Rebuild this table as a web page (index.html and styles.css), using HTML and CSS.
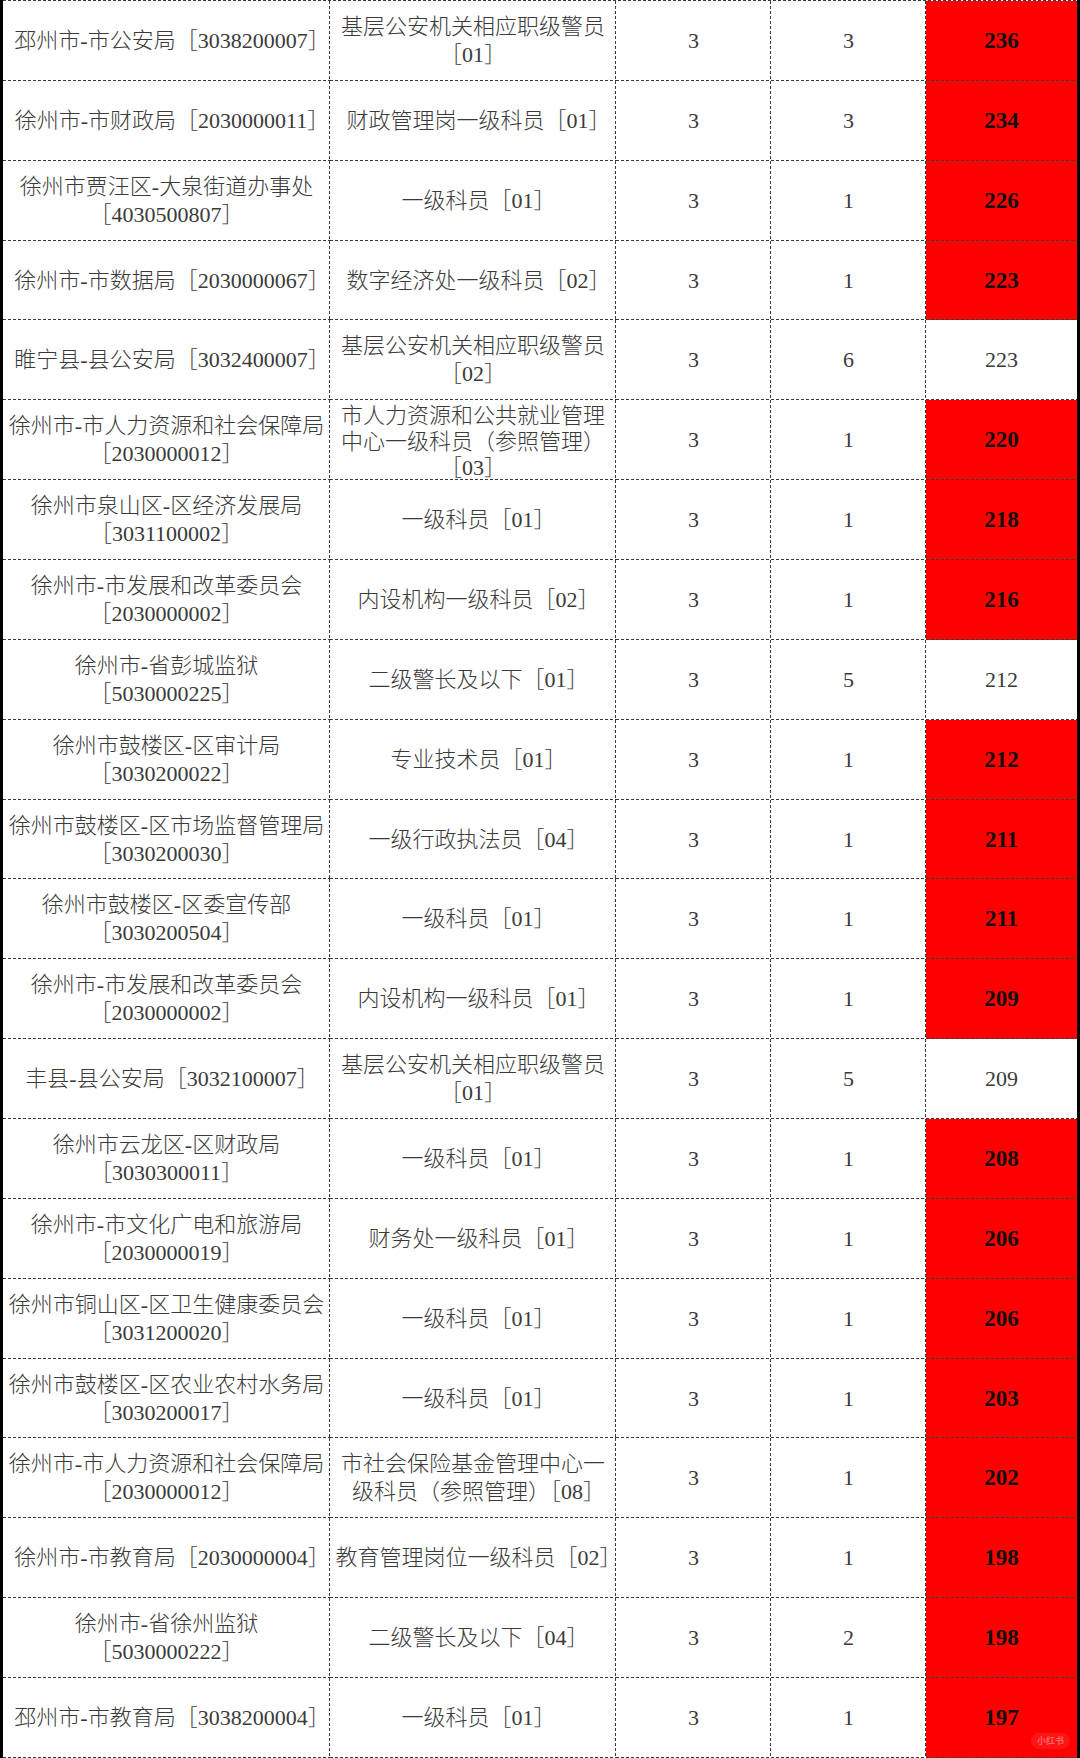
FILE: index.html
```html
<!DOCTYPE html>
<html lang="zh-CN">
<head>
<meta charset="utf-8">
<title>岗位报名统计</title>
<link rel="stylesheet" href="styles.css">
</head>
<body>
<div class="sheet">
  <div class="cell"><p class="txt">邳州市-市公安局<span class="code">［3038200007］</span></p></div>
  <div class="cell"><p class="txt">基层公安机关相应职级警员<br><span class="code solo">［01］</span></p></div>
  <div class="cell">3</div><div class="cell">3</div><div class="cell num hot">236</div>

  <div class="cell"><p class="txt">徐州市-市财政局<span class="code">［2030000011］</span></p></div>
  <div class="cell"><p class="txt">财政管理岗一级科员<span class="code">［01］</span></p></div>
  <div class="cell">3</div><div class="cell">3</div><div class="cell num hot">234</div>

  <div class="cell"><p class="txt">徐州市贾汪区-大泉街道办事处<br><span class="code solo">［4030500807］</span></p></div>
  <div class="cell"><p class="txt">一级科员<span class="code">［01］</span></p></div>
  <div class="cell">3</div><div class="cell">1</div><div class="cell num hot">226</div>

  <div class="cell"><p class="txt">徐州市-市数据局<span class="code">［2030000067］</span></p></div>
  <div class="cell"><p class="txt">数字经济处一级科员<span class="code">［02］</span></p></div>
  <div class="cell">3</div><div class="cell">1</div><div class="cell num hot">223</div>

  <div class="cell"><p class="txt">睢宁县-县公安局<span class="code">［3032400007］</span></p></div>
  <div class="cell"><p class="txt">基层公安机关相应职级警员<br><span class="code solo">［02］</span></p></div>
  <div class="cell">3</div><div class="cell">6</div><div class="cell num">223</div>

  <div class="cell"><p class="txt">徐州市-市人力资源和社会保障局<br><span class="code solo">［2030000012］</span></p></div>
  <div class="cell tight"><p class="txt">市人力资源和公共就业管理<br>中心一级科员（参照管理）<br><span class="code solo">［03］</span></p></div>
  <div class="cell">3</div><div class="cell">1</div><div class="cell num hot">220</div>

  <div class="cell"><p class="txt">徐州市泉山区-区经济发展局<br><span class="code solo">［3031100002］</span></p></div>
  <div class="cell"><p class="txt">一级科员<span class="code">［01］</span></p></div>
  <div class="cell">3</div><div class="cell">1</div><div class="cell num hot">218</div>

  <div class="cell"><p class="txt">徐州市-市发展和改革委员会<br><span class="code solo">［2030000002］</span></p></div>
  <div class="cell"><p class="txt">内设机构一级科员<span class="code">［02］</span></p></div>
  <div class="cell">3</div><div class="cell">1</div><div class="cell num hot">216</div>

  <div class="cell"><p class="txt">徐州市-省彭城监狱<br><span class="code solo">［5030000225］</span></p></div>
  <div class="cell"><p class="txt">二级警长及以下<span class="code">［01］</span></p></div>
  <div class="cell">3</div><div class="cell">5</div><div class="cell num">212</div>

  <div class="cell"><p class="txt">徐州市鼓楼区-区审计局<br><span class="code solo">［3030200022］</span></p></div>
  <div class="cell"><p class="txt">专业技术员<span class="code">［01］</span></p></div>
  <div class="cell">3</div><div class="cell">1</div><div class="cell num hot">212</div>

  <div class="cell"><p class="txt">徐州市鼓楼区-区市场监督管理局<br><span class="code solo">［3030200030］</span></p></div>
  <div class="cell"><p class="txt">一级行政执法员<span class="code">［04］</span></p></div>
  <div class="cell">3</div><div class="cell">1</div><div class="cell num hot">211</div>

  <div class="cell"><p class="txt">徐州市鼓楼区-区委宣传部<br><span class="code solo">［3030200504］</span></p></div>
  <div class="cell"><p class="txt">一级科员<span class="code">［01］</span></p></div>
  <div class="cell">3</div><div class="cell">1</div><div class="cell num hot">211</div>

  <div class="cell"><p class="txt">徐州市-市发展和改革委员会<br><span class="code solo">［2030000002］</span></p></div>
  <div class="cell"><p class="txt">内设机构一级科员<span class="code">［01］</span></p></div>
  <div class="cell">3</div><div class="cell">1</div><div class="cell num hot">209</div>

  <div class="cell"><p class="txt">丰县-县公安局<span class="code">［3032100007］</span></p></div>
  <div class="cell"><p class="txt">基层公安机关相应职级警员<br><span class="code solo">［01］</span></p></div>
  <div class="cell">3</div><div class="cell">5</div><div class="cell num">209</div>

  <div class="cell"><p class="txt">徐州市云龙区-区财政局<br><span class="code solo">［3030300011］</span></p></div>
  <div class="cell"><p class="txt">一级科员<span class="code">［01］</span></p></div>
  <div class="cell">3</div><div class="cell">1</div><div class="cell num hot">208</div>

  <div class="cell"><p class="txt">徐州市-市文化广电和旅游局<br><span class="code solo">［2030000019］</span></p></div>
  <div class="cell"><p class="txt">财务处一级科员<span class="code">［01］</span></p></div>
  <div class="cell">3</div><div class="cell">1</div><div class="cell num hot">206</div>

  <div class="cell"><p class="txt">徐州市铜山区-区卫生健康委员会<br><span class="code solo">［3031200020］</span></p></div>
  <div class="cell"><p class="txt">一级科员<span class="code">［01］</span></p></div>
  <div class="cell">3</div><div class="cell">1</div><div class="cell num hot">206</div>

  <div class="cell"><p class="txt">徐州市鼓楼区-区农业农村水务局<br><span class="code solo">［3030200017］</span></p></div>
  <div class="cell"><p class="txt">一级科员<span class="code">［01］</span></p></div>
  <div class="cell">3</div><div class="cell">1</div><div class="cell num hot">203</div>

  <div class="cell"><p class="txt">徐州市-市人力资源和社会保障局<br><span class="code solo">［2030000012］</span></p></div>
  <div class="cell"><p class="txt">市社会保险基金管理中心一<br>级科员（参照管理）<span class="code">［08］</span></p></div>
  <div class="cell">3</div><div class="cell">1</div><div class="cell num hot">202</div>

  <div class="cell"><p class="txt">徐州市-市教育局<span class="code">［2030000004］</span></p></div>
  <div class="cell"><p class="txt">教育管理岗位一级科员<span class="code">［02］</span></p></div>
  <div class="cell">3</div><div class="cell">1</div><div class="cell num hot">198</div>

  <div class="cell"><p class="txt">徐州市-省徐州监狱<br><span class="code solo">［5030000222］</span></p></div>
  <div class="cell"><p class="txt">二级警长及以下<span class="code">［04］</span></p></div>
  <div class="cell">3</div><div class="cell">2</div><div class="cell num hot">198</div>

  <div class="cell"><p class="txt">邳州市-市教育局<span class="code">［3038200004］</span></p></div>
  <div class="cell"><p class="txt">一级科员<span class="code">［01］</span></p></div>
  <div class="cell">3</div><div class="cell">1</div><div class="cell num hot">197</div>

  <div class="watermark">小红书</div>
</div>
</body>
</html>
```

FILE: styles.css
```css
html, body {
  margin: 0;
  padding: 0;
  background: #ffffff;
}

.sheet {
  --line: #3a3a3a;
  position: relative;
  width: 1080px;
  box-sizing: border-box;
  border-left: 3px solid #000;
  border-right: 3px solid #000;
  padding-top: 1px;
  display: grid;
  grid-template-columns: 327px 286px 155px 155px 151px;
  grid-auto-rows: 79.86px;
  background-image: repeating-linear-gradient(90deg, var(--line) 0 3px, transparent 3px 5px);
  background-size: 100% 1px;
  background-position: left top;
  background-repeat: no-repeat;
  font-family: "Liberation Serif", "Noto Sans CJK SC", serif;
  font-size: 22px;
  font-weight: 300;
  line-height: 28px;
  color: #3a3a3a;
}

.cell {
  display: flex;
  align-items: center;
  justify-content: center;
  text-align: center;
  overflow: hidden;
  white-space: nowrap;
  background-image:
    repeating-linear-gradient(90deg, var(--line) 0 3px, transparent 3px 5px),
    repeating-linear-gradient(180deg, var(--line) 0 3px, transparent 3px 5px);
  background-size: 100% 1px, 1px 100%;
  background-position: left bottom, right top;
  background-repeat: no-repeat;
}

.cell:nth-child(5n) {
  background-image: repeating-linear-gradient(90deg, var(--line) 0 3px, transparent 3px 5px);
  background-size: 100% 1px;
  background-position: left bottom;
}

.txt {
  margin: 0;
  text-align: center;
}

.code {
  margin-right: -0.5em;
}

.code.solo {
  margin-right: 0;
}

.tight {
  align-items: flex-start;
  padding-top: 3px;
  line-height: 26px;
}

.num {
  font-size: 22px;
}

.hot {
  background-color: #ff0000;
  color: #111;
  font-weight: 700;
  font-size: 23px;
}

.watermark {
  position: absolute;
  right: 7px;
  bottom: 9px;
  padding: 2px 6px;
  border-radius: 8px;
  background: rgba(255, 255, 255, 0.08);
  color: rgba(255, 255, 255, 0.35);
  font-family: "Noto Sans CJK SC", sans-serif;
  font-size: 9px;
  line-height: 12px;
  font-weight: 700;
}
```
